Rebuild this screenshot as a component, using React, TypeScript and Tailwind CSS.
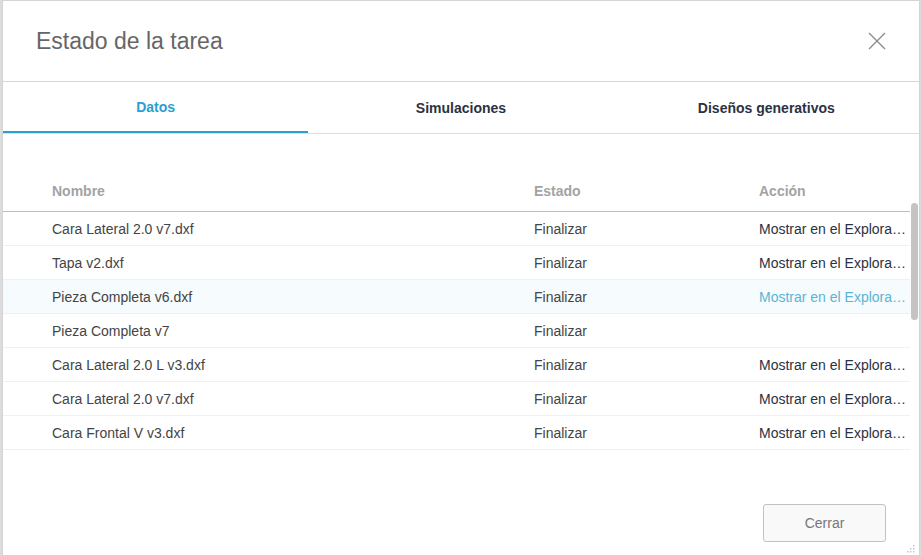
import React from 'react';

const rows = [
    { name: 'Cara Lateral 2.0 v7.dxf', status: 'Finalizar', action: 'Mostrar en el Explorador' },
    { name: 'Tapa v2.dxf', status: 'Finalizar', action: 'Mostrar en el Explorador' },
    { name: 'Pieza Completa v6.dxf', status: 'Finalizar', action: 'Mostrar en el Explorador', hover: true },
    { name: 'Pieza Completa v7', status: 'Finalizar', action: '' },
    { name: 'Cara Lateral 2.0 L v3.dxf', status: 'Finalizar', action: 'Mostrar en el Explorador' },
    { name: 'Cara Lateral 2.0 v7.dxf', status: 'Finalizar', action: 'Mostrar en el Explorador' },
    { name: 'Cara Frontal V v3.dxf', status: 'Finalizar', action: 'Mostrar en el Explorador' },
];

const tabs = ['Datos', 'Simulaciones', 'Diseños generativos'];

const App = () => {
    return (
        <div className="w-[921px] h-[556px] bg-[#dcdcdc] pl-[2px] pr-[1px] overflow-hidden" style={{ fontFamily: '"Liberation Sans", Arial, sans-serif' }}>
            <div className="relative h-full bg-white border border-[#d4d4d4] flex flex-col">
                {/* header */}
                <div className="h-[81px] flex items-center justify-between pl-[33px] pr-[32px] border-b border-[#d6d6d6] shrink-0">
                    <h2 className="text-[23px] text-[#666666] mt-[1px]">Estado de la tarea</h2>
                    <button className="w-[20px] h-[20px] flex items-center justify-center">
                        <svg width="18" height="18" viewBox="0 0 18 18" stroke="#8a8a8a" strokeWidth="1.3" fill="none">
                            <path d="M1 1 L17 17 M17 1 L1 17" />
                        </svg>
                    </button>
                </div>

                {/* tabs */}
                <div className="grid grid-cols-3 h-[52px] border-b border-[#dedede] shrink-0">
                    {tabs.map((t, i) => (
                        <div key={t} className={`flex items-center justify-center text-[14px] font-bold ${i === 0 ? 'text-[#2a9fd0] border-b-2 border-[#2a9fd0]' : 'text-[#2c3142]'}`}>
                            <span className="mt-[2px]">{t}</span>
                        </div>
                    ))}
                </div>

                {/* table */}
                <div className="relative mt-[36px] pr-[9px]">
                    <div className="grid grid-cols-[482px_225px_1fr] h-[42px] items-center pl-[49px] border-b border-[#bdbdbd] text-[14px] font-bold text-[#a3a3a3]">
                        <span className="mt-[1px]">Nombre</span>
                        <span className="mt-[1px]">Estado</span>
                        <span className="mt-[1px]">Acción</span>
                    </div>
                    {rows.map((r, i) => (
                        <div key={i} className={`grid grid-cols-[482px_225px_1fr] h-[34px] items-center pl-[49px] border-b border-[#f0f0f0] text-[14px] ${r.hover ? 'bg-[#f6fbfd]' : ''}`}>
                            <span className="text-[#444444] mt-[2px]">{r.name}</span>
                            <span className="text-[#444444] mt-[2px]">{r.status}</span>
                            <span className={`truncate pr-[2px] mt-[2px] ${r.hover ? 'text-[#5ab5d4]' : 'text-[#2c3142]'}`}>{r.action}</span>
                        </div>
                    ))}
                    {/* scrollbar */}
                    <div className="absolute right-[1px] top-[33px] w-[7px] h-[117px] rounded-[4px] bg-[#c4c4c4]" />
                </div>

                {/* footer */}
                <div className="flex-1 flex items-end justify-end pr-[33px] pb-[13px]">
                    <button className="w-[123px] h-[38px] border border-[#c2c2c2] rounded-[3px] bg-[#f9f9f9] text-[14px] text-[#777777]">
                        Cerrar
                    </button>
                </div>

                {/* resize grip */}
                <svg className="absolute right-[4px] bottom-[2px]" width="8" height="8" viewBox="0 0 8 8" fill="#c8c8c8">
                    <rect x="6" y="0" width="1.5" height="1.5" />
                    <rect x="3" y="3" width="1.5" height="1.5" />
                    <rect x="6" y="3" width="1.5" height="1.5" />
                    <rect x="0" y="6" width="1.5" height="1.5" />
                    <rect x="3" y="6" width="1.5" height="1.5" />
                    <rect x="6" y="6" width="1.5" height="1.5" />
                </svg>
            </div>
        </div>
    );
};

export default App;
